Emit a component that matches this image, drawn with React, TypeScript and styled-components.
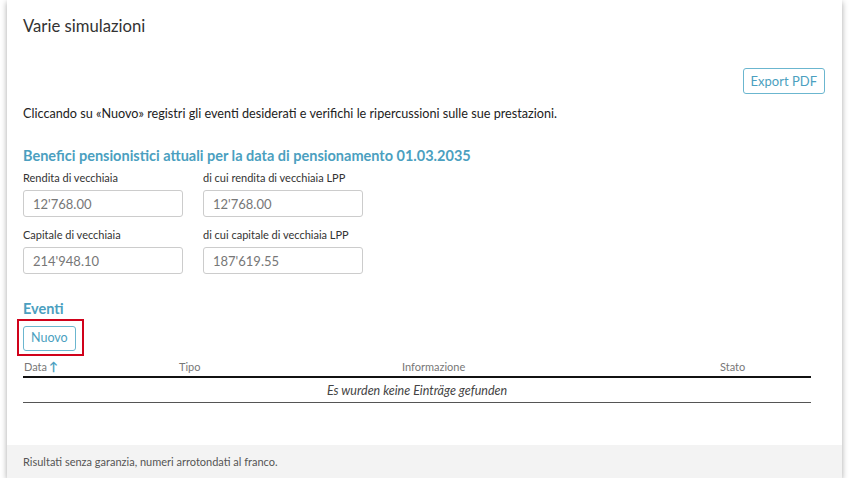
import styled, { createGlobalStyle } from "styled-components";

const GlobalStyle = createGlobalStyle`
  html, body {
    margin: 0;
    padding: 0;
    background: #ffffff;
    font-family: Lato, "Open Sans", sans-serif;
    color: #333;
  }
`;

const TEAL = "#4b9fc0";

const Card = styled.div`
  margin: 0 8px 0 7px;
  width: 835px;
  height: 478px;
  background: #fff;
  box-shadow: 0 2px 6px rgba(0, 0, 0, 0.35);
  display: flex;
  flex-direction: column;
`;

const Body = styled.div`
  flex: 1;
  padding: 16px 17px 0 16px;
  display: flex;
  flex-direction: column;
`;

const Title = styled.h1`
  margin: 0;
  font-size: 16.7px;
  line-height: 20px;
  font-weight: 400;
  color: #333;
`;

const Toolbar = styled.div`
  margin-top: 32px;
  display: flex;
  justify-content: flex-end;
`;

const OutlineButton = styled.button<{ $size?: number; $h?: number; $pad?: number }>`
  font-family: inherit;
  font-size: ${(p) => p.$size ?? 13}px;
  color: ${TEAL};
  background: #fff;
  border: 1px solid #6bb6cf;
  border-radius: 3px;
  padding: 0 ${(p) => p.$pad ?? 8}px;
  height: ${(p) => p.$h ?? 26}px;
  line-height: 1;
  cursor: pointer;
`;

const Intro = styled.p`
  margin: 11px 0 0;
  font-size: 12.65px;
  line-height: 18px;
  color: #222;
`;

const SectionTitle = styled.h2<{ $top: number }>`
  margin: ${(p) => p.$top}px 0 0;
  font-size: 14.5px;
  line-height: 20px;
  font-weight: 700;
  color: ${TEAL};
`;

const FieldRow = styled.div<{ $top: number }>`
  margin-top: ${(p) => p.$top}px;
  display: flex;
  gap: 20px;
`;

const Field = styled.div`
  width: 160px;
  display: flex;
  flex-direction: column;
  gap: 5px;
`;

const Label = styled.label`
  font-size: 11px;
  line-height: 14px;
  color: #333;
`;

const Input = styled.div`
  box-sizing: border-box;
  height: 27px;
  border: 1px solid #ccc;
  border-radius: 3px;
  padding: 0 9px;
  display: flex;
  align-items: center;
  font-size: 13px;
  color: #777;
`;

const Highlight = styled.div`
  align-self: flex-start;
  margin-left: -6px;
  border: 2px solid #d0021b;
  padding: 5px 6px 3px 4px;
  display: flex;
`;

const Table = styled.div`
  margin-top: 1px;
  width: 788px;
`;

const HeadRow = styled.div`
  display: grid;
  grid-template-columns: 147px 223px 318px 100px;
  height: 19px;
  border-bottom: 2px solid #111;
  align-items: end;
`;

const HeadCell = styled.div<{ $first?: boolean }>`
  font-size: 11px;
  line-height: 14px;
  color: #777;
  padding-left: ${(p) => (p.$first ? 1 : 9)}px;
  padding-bottom: 2px;
`;

const SortArrow = styled.span`
  color: ${TEAL};
  font-size: 12px;
  font-weight: 700;
  margin-left: 2px;
`;

const EmptyRow = styled.div`
  height: 24px;
  border-bottom: 1px solid #555;
  display: flex;
  align-items: center;
  justify-content: center;
  font-size: 12.5px;
  font-style: italic;
  color: #444;
`;

const Footer = styled.div`
  height: 33px;
  background: #f3f3f3;
  padding-left: 16px;
  display: flex;
  align-items: center;
  font-size: 11px;
  color: #555;
`;

const fields = [
  [
    { label: "Rendita di vecchiaia", value: "12'768.00" },
    { label: "di cui rendita di vecchiaia LPP", value: "12'768.00" },
  ],
  [
    { label: "Capitale di vecchiaia", value: "214'948.10" },
    { label: "di cui capitale di vecchiaia LPP", value: "187'619.55" },
  ],
];

export default function App() {
  return (
    <>
      <GlobalStyle />
      <Card>
        <Body>
          <Title>Varie simulazioni</Title>
          <Toolbar>
            <OutlineButton $pad={7}>Export PDF</OutlineButton>
          </Toolbar>
          <Intro>
            Cliccando su «Nuovo» registri gli eventi desiderati e verifichi le ripercussioni sulle sue prestazioni.
          </Intro>
          <SectionTitle $top={23}>
            Benefici pensionistici attuali per la data di pensionamento 01.03.2035
          </SectionTitle>
          {fields.map((row, i) => (
            <FieldRow key={i} $top={i === 0 ? 5 : 11}>
              {row.map((f) => (
                <Field key={f.label}>
                  <Label>{f.label}</Label>
                  <Input>{f.value}</Input>
                </Field>
              ))}
            </FieldRow>
          ))}
          <SectionTitle $top={25}>Eventi</SectionTitle>
          <Highlight>
            <OutlineButton $size={12.5} $h={25} $pad={7}>Nuovo</OutlineButton>
          </Highlight>
          <Table>
            <HeadRow>
              <HeadCell $first>
                Data<SortArrow>↑</SortArrow>
              </HeadCell>
              <HeadCell>Tipo</HeadCell>
              <HeadCell>Informazione</HeadCell>
              <HeadCell>Stato</HeadCell>
            </HeadRow>
            <EmptyRow>Es wurden keine Einträge gefunden</EmptyRow>
          </Table>
        </Body>
        <Footer>Risultati senza garanzia, numeri arrotondati al franco.</Footer>
      </Card>
    </>
  );
}
